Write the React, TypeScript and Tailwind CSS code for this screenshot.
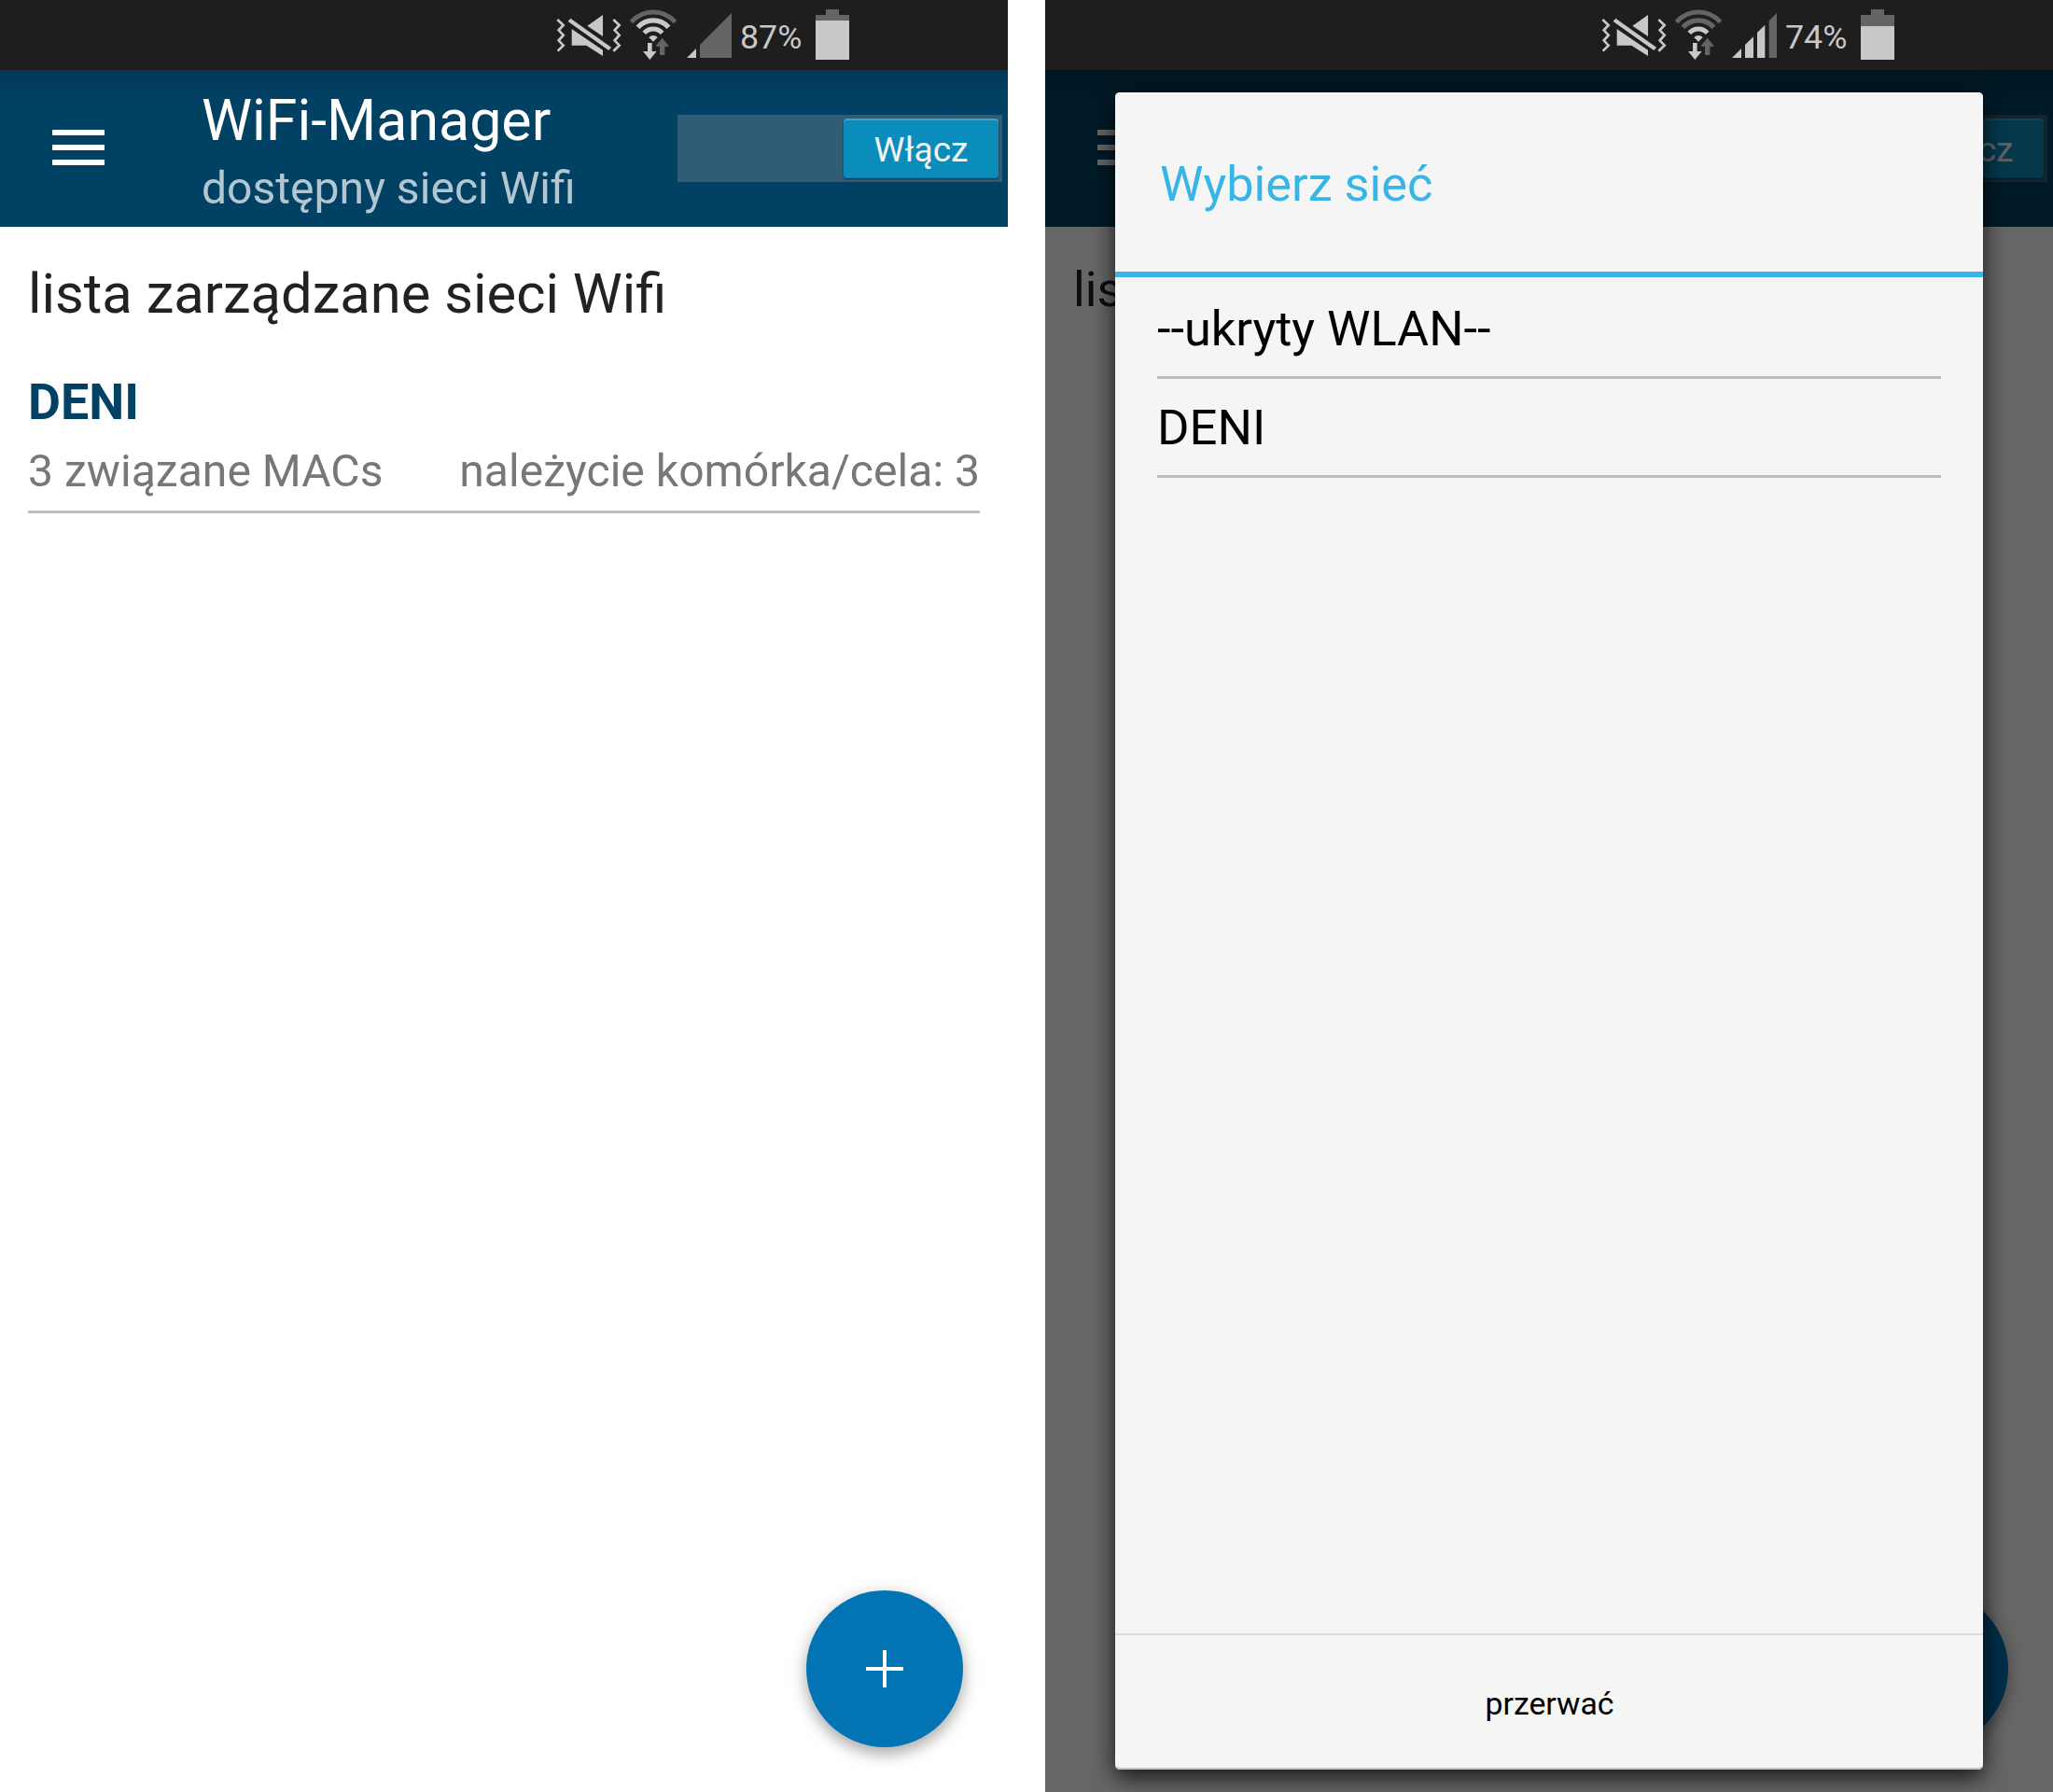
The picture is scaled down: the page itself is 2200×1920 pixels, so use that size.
import type { ReactNode } from "react";

type StatusProps = { level: number; wifi: 2 | 3; cell: 1 | 3; fillTop: number };

const LIGHT = "#c8c8c8";
const DIM = "#646464";

function StatusBar({ level, wifi, cell, fillTop }: StatusProps) {
  return (
    <div className="flex h-[75px] shrink-0 items-start bg-[#1e1e1e] pl-[580px]">
      <svg width="210" height="75" viewBox="0 0 630 225" className="shrink-0" fill="none">
        {/* vibrate waves */}
        <g stroke={LIGHT} strokeWidth="8">
          <path d="M52 63L71 81L56 97L71 113L56 130L71 146L53 164" />
          <path d="M232 63L251 81L236 97L251 113L236 130L251 146L232 164" />
        </g>
        {/* muted speaker */}
        <g fill={LIGHT}>
          <path d="M198 48V117L148 83Z" />
          <path d="M94 59L225 152L217 162L86 69Z" />
          <path d="M98 93L198 161V180L145 146H98Z" />
        </g>
        {/* wifi with traffic arrows */}
        <path d="M289.5 71A94 94 0 0 1 430.5 71" stroke={DIM} strokeWidth="15" />
        <path d="M310.5 88A66 66 0 0 1 409.5 88" stroke={wifi === 3 ? LIGHT : DIM} strokeWidth="16" />
        <path d="M331 106A38.5 38.5 0 0 1 389 106" stroke={LIGHT} strokeWidth="15" />
        <path d="M346 120A19 19 0 0 1 374 120L360 134Z" fill={LIGHT} />
        <path d="M342 138H356V165H371L349 192L327 165H342Z" fill={LIGHT} />
        <path d="M389 122L411 149H397V177H381V149H367Z" fill={DIM} />
        {/* cellular signal */}
        <path d="M468 186L498 156V186Z" fill={LIGHT} />
        {cell === 1 ? (
          <path d="M510 186V144L612 42V186Z" fill={DIM} />
        ) : (
          <>
            <path d="M510 186V144L537 118V186Z" fill={LIGHT} />
            <path d="M549 186V105L574 80V186Z" fill={LIGHT} />
            <path d="M587 186V67L612 42V186Z" fill={DIM} />
          </>
        )}
      </svg>
      <span className="ml-[3px] mt-[19px] w-[67px] text-[35.8px] leading-[42px] text-[#c8c8c8]">{level}%</span>
      <svg width="36" height="54" viewBox="0 0 36 54" className="mt-[10px] ml-[14px] shrink-0">
        <path d="M11 0H25V6H36V54H0V6H11Z" fill={DIM} />
        <rect y={fillTop} width="36" height={54 - fillTop} fill={LIGHT} />
      </svg>
    </div>
  );
}

function ActionBar({ title, subtitle }: { title?: string; subtitle?: string }) {
  return (
    <header className="flex h-[168px] shrink-0 bg-[#014264] bg-linear-to-b from-[#013857] to-[#014264] to-20% pl-[56px]">
      <div className="mt-[64px] flex w-[56px] flex-col gap-[10px]">
        <span className="h-[6px] bg-white" />
        <span className="h-[6px] bg-white" />
        <span className="h-[6px] bg-white" />
      </div>
      <div className="ml-[104px] flex-1 pt-[19px] whitespace-nowrap">
        {title && <h1 className="text-[60.9px] leading-[72px] text-white">{title}</h1>}
        {subtitle && <p className="text-[48.1px] leading-[72px] text-[#b3c6d1]">{subtitle}</p>}
      </div>
      <div className="mt-[48px] mr-[6px] flex h-[72px] w-[348px] justify-end bg-[#305d75] p-[4px]">
        <div className="flex w-[166px] justify-center rounded-[4px] bg-[#0b8dbb] pt-[12px] text-[37.1px] leading-[43px] text-[#f3f3f3] shadow-[inset_0_2px_0_#3ca4c9,inset_0_-1px_0_#0a7ca6,0_1px_2px_rgba(0,0,0,0.5)]">
          Włącz
        </div>
      </div>
    </header>
  );
}

function AddButton() {
  return (
    <div className="absolute top-[1704px] left-[864px] flex size-[168px] items-center justify-center rounded-full bg-[#0374b3] shadow-[0_8px_14px_rgba(0,0,0,0.2),0_4px_22px_rgba(0,0,0,0.18)]">
      <svg width="40" height="40" viewBox="0 0 40 40">
        <path d="M20 0V40M0 20H40" stroke="#fff" strokeWidth="4" />
      </svg>
    </div>
  );
}

function Phone({ status, children }: { status: ReactNode; children: ReactNode }) {
  return (
    <section className="relative flex h-[1920px] w-[1080px] shrink-0 flex-col overflow-hidden bg-white">
      {status}
      {children}
    </section>
  );
}

function NetworkDialog() {
  return (
    <div className="absolute top-[99px] left-[75px] flex h-[1797px] w-[930px] flex-col rounded-[5px] bg-[#f5f5f5] text-black shadow-[inset_0_1px_0_#ffffff,inset_0_-2px_0_#c4c4c4,0_8px_24px_rgba(0,0,0,0.8)]">
      <h2 className="h-[198px] border-b-[6px] border-[#35b6e6] pt-[68px] pl-[48px] text-[52.3px] leading-[61px] text-[#35b6e6]">
        Wybierz sieć
      </h2>
      <ul className="flex-1 px-[45px] text-[52.3px] leading-[61px]">
        <li className="h-[109px] border-b-[3px] border-[#bdbdbd] pt-[25px]">--ukryty WLAN--</li>
        <li className="h-[106px] border-b-[3px] border-[#bdbdbd] pt-[22px] text-[52.6px]">DENI</li>
      </ul>
      <div className="h-[146px] border-t-2 border-[#dadada] pt-[54px] pl-px text-center text-[33.8px] leading-[39px]">
        przerwać
      </div>
    </div>
  );
}

export default function App() {
  return (
    <main className="flex h-[1920px] w-[2200px] gap-[40px] overflow-hidden bg-white font-[Roboto,sans-serif]">
      <Phone status={<StatusBar level={87} wifi={3} cell={1} fillTop={12} />}>
        <ActionBar title="WiFi-Manager" subtitle="dostępny sieci Wifi" />
        <div className="px-[30px] pt-[37px] whitespace-nowrap">
          <h2 className="text-[59.7px] leading-[70px] text-[#222222]">lista zarządzane sieci Wifi</h2>
          <div className="mt-[49px] border-b-[3px] border-[#bdbdbd] pb-[14px]">
            <h3 className="text-[53.8px] leading-[63px] font-bold text-[#014264]">DENI</h3>
            <div className="mt-[14px] flex justify-between text-[48.1px] leading-[57px] text-[#777777]">
              <span>3 związane MACs</span>
              <span>należycie komórka/cela: 3</span>
            </div>
          </div>
        </div>
        <AddButton />
      </Phone>

      <Phone status={<StatusBar level={74} wifi={2} cell={3} fillTop={18} />}>
        <ActionBar />
        <div className="px-[30px] pt-[36px] text-[52.5px] leading-[62px] text-[#222222]">lista</div>
        <AddButton />
        <div className="absolute inset-x-0 top-[75px] bottom-0 bg-black/60" />
        <NetworkDialog />
      </Phone>
    </main>
  );
}
